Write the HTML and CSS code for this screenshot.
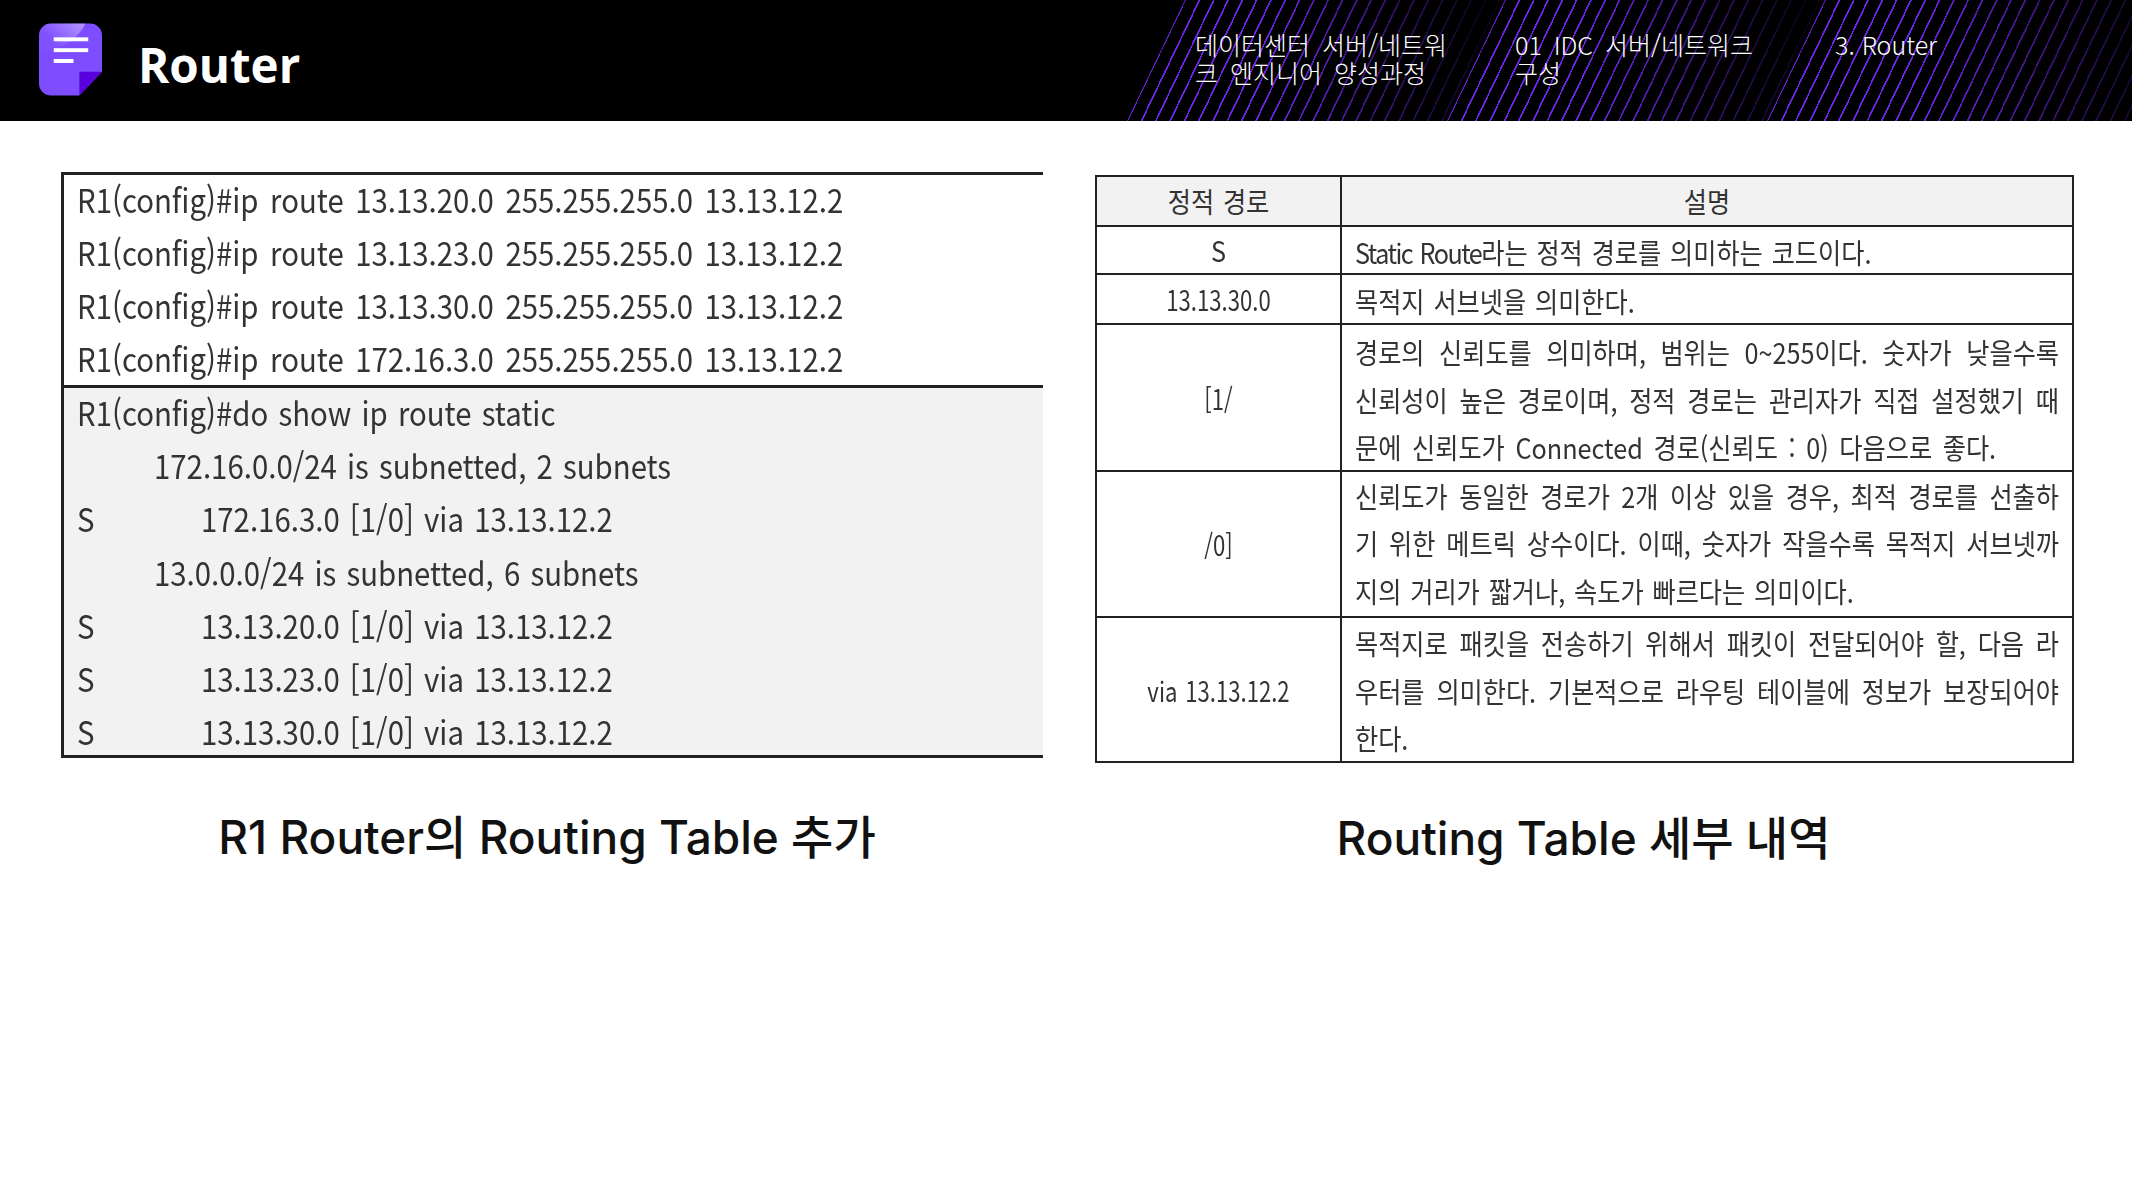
FILE: index.html
```html
<!DOCTYPE html>
<html lang="ko">
<head>
<meta charset="utf-8">
<title>Router</title>
<link rel="stylesheet" href="styles.css">
</head>
<body>
<header class="topbar">
  <svg class="logo" viewBox="0 0 64 73" aria-hidden="true">
    <defs>
      <linearGradient id="shine" x1="0.2" y1="0.5" x2="1" y2="0">
        <stop offset="0" stop-color="#fff" stop-opacity="0.02"/>
        <stop offset="1" stop-color="#fff" stop-opacity="0.42"/>
      </linearGradient>
    </defs>
    <path fill="#7d4dff" d="M12 0H52A12 12 0 0 1 64 12V49L41 73H12A12 12 0 0 1 0 61V12A12 12 0 0 1 12 0Z"/>
    <path fill="url(#shine)" d="M12 0H47C40 16 22 27 0 29V12A12 12 0 0 1 12 0Z"/>
    <path fill="#5a00dc" d="M41 49H64L41 73Z"/>
    <rect fill="#fff" x="15" y="14" width="35" height="4"/>
    <rect fill="#fff" x="15" y="25" width="35" height="4"/>
    <rect fill="#fff" x="15" y="36" width="20" height="4"/>
  </svg>
  <h1 class="title">Router</h1>
  <nav class="crumbs">
    <div class="crumb"><span class="crumb-text">데이터센터 서버/네트워크 엔지니어 양성과정</span></div>
    <div class="crumb"><span class="crumb-text">01 IDC 서버/네트워크 구성</span></div>
    <div class="crumb crumb-last"><span class="crumb-text">3. Router</span></div>
  </nav>
</header>
<main class="slide">
  <figure class="panel">
    <div class="console">
      <div class="console-top">
        <div class="line"><span class="txt">R1(config)#ip route 13.13.20.0 255.255.255.0 13.13.12.2</span></div>
        <div class="line"><span class="txt">R1(config)#ip route 13.13.23.0 255.255.255.0 13.13.12.2</span></div>
        <div class="line"><span class="txt">R1(config)#ip route 13.13.30.0 255.255.255.0 13.13.12.2</span></div>
        <div class="line"><span class="txt">R1(config)#ip route 172.16.3.0 255.255.255.0 13.13.12.2</span></div>
      </div>
      <div class="console-bottom">
        <div class="line"><span class="txt">R1(config)#do show ip route static</span></div>
        <div class="line line-sub"><span class="txt">172.16.0.0/24 is subnetted, 2 subnets</span></div>
        <div class="line line-route"><span class="code">S</span><span class="txt">172.16.3.0 [1/0] via 13.13.12.2</span></div>
        <div class="line line-sub"><span class="txt">13.0.0.0/24 is subnetted, 6 subnets</span></div>
        <div class="line line-route"><span class="code">S</span><span class="txt">13.13.20.0 [1/0] via 13.13.12.2</span></div>
        <div class="line line-route"><span class="code">S</span><span class="txt">13.13.23.0 [1/0] via 13.13.12.2</span></div>
        <div class="line line-route"><span class="code">S</span><span class="txt">13.13.30.0 [1/0] via 13.13.12.2</span></div>
      </div>
    </div>
    <figcaption class="caption caption-left">R1 Router의 Routing Table 추가</figcaption>
  </figure>
  <figure class="panel panel-right">
    <table class="detail">
      <colgroup><col class="col-a"><col class="col-b"></colgroup>
      <thead>
        <tr class="r-head"><th><span class="mid">정적 경로</span></th><th><span class="mid">설명</span></th></tr>
      </thead>
      <tbody>
        <tr class="r-s"><td class="key"><span class="mid">S</span></td><td class="desc"><span class="ln end"><span class="nar">Static Route</span>라는 정적 경로를 의미하는 코드이다.</span></td></tr>
        <tr class="r-net"><td class="key"><span class="mid num">13.13.30.0</span></td><td class="desc"><span class="ln end">목적지 서브넷을 의미한다.</span></td></tr>
        <tr class="r-a"><td class="key"><span class="mid num">[1/</span></td><td class="desc">
          <span class="ln">경로의 신뢰도를 의미하며, 범위는 0~255이다. 숫자가 낮을수록</span>
          <span class="ln">신뢰성이 높은 경로이며, 정적 경로는 관리자가 직접 설정했기 때</span>
          <span class="ln end wide">문에 신뢰도가 Connected 경로(신뢰도 : 0) 다음으로 좋다.</span></td></tr>
        <tr class="r-b"><td class="key"><span class="mid num">/0]</span></td><td class="desc">
          <span class="ln">신뢰도가 동일한 경로가 2개 이상 있을 경우, 최적 경로를 선출하</span>
          <span class="ln">기 위한 메트릭 상수이다. 이때, 숫자가 작을수록 목적지 서브넷까</span>
          <span class="ln end">지의 거리가 짧거나, 속도가 빠르다는 의미이다.</span></td></tr>
        <tr class="r-c"><td class="key"><span class="mid num">via 13.13.12.2</span></td><td class="desc">
          <span class="ln">목적지로 패킷을 전송하기 위해서 패킷이 전달되어야 할, 다음 라</span>
          <span class="ln">우터를 의미한다. 기본적으로 라우팅 테이블에 정보가 보장되어야</span>
          <span class="ln end">한다.</span></td></tr>
      </tbody>
    </table>
    <figcaption class="caption caption-right">Routing Table 세부 내역</figcaption>
  </figure>
</main>
</body>
</html>
```
FILE: styles.css
```css
* { box-sizing: border-box; }
html, body { margin: 0; background: #fff; }
body { width: 2132px; height: 1200px; overflow: hidden; font-family: "Noto Sans CJK KR", "Noto Sans", sans-serif; color: #222; }

.topbar { height: 121px; background: #000; display: flex; align-items: center; padding-left: 39px; overflow: hidden; }
.logo { width: 63px; height: 73px; flex: none; margin-top: -2px; }
.title { margin: 8px 0 0 36px; font: 700 47.5px/1 "Open Sans", sans-serif; color: #fff; }

.crumbs { margin-left: auto; width: 1005px; height: 121px; display: flex; flex: none; }
.crumb { position: relative; width: 378px; height: 121px; flex: none; margin-right: -58px; padding: 30px 0 0 68px; }
.crumb-last { width: 423px; margin-right: 0; }
.crumb::before {
  content: ""; position: absolute; inset: 0;
  background: repeating-linear-gradient(115.6deg, #6a24e6 0, #6a24e6 1.7px, transparent 1.7px, transparent 12.9px);
  clip-path: polygon(58px 0, 100% 0, calc(100% - 58px) 100%, 0 100%);
  -webkit-mask-image: linear-gradient(to right, #000 35%, rgba(0,0,0,.12) 92%, rgba(0,0,0,.05) 100%);
  mask-image: linear-gradient(to right, #000 35%, rgba(0,0,0,.12) 92%, rgba(0,0,0,.05) 100%);
}
.crumb-text { position: relative; display: block; width: 262px; font-size: 25px; font-weight: 300; line-height: 28px; color: #fff; word-break: break-all; word-spacing: 5px; }
.crumb-last .crumb-text { word-spacing: 0; }

.slide { display: grid; grid-template-columns: 982px 977px; column-gap: 52px; padding: 51px 0 0 61px; }
.panel { margin: 0; display: flex; flex-direction: column; }
.panel-right { margin-top: 3px; }

.console { height: 586px; border: 3px solid #222; border-right: 0; filter: blur(.4px); font-size: 33px; color: #333; }
.console-top { height: 213px; border-bottom: 3px solid #222; }
.console-bottom { height: 367px; background: #f2f2f2; }
.console-top .line { height: 53px; padding-bottom: 5px; }
.console-top .txt { word-spacing: 3.7px; }
.console-bottom .line { height: 53.3px; padding-bottom: 6px; }
.console-bottom .txt { word-spacing: 2.2px; }
.line { display: flex; align-items: center; padding-left: 13px; white-space: nowrap; }
.line-sub { padding-left: 90px; }
.code { width: 124px; flex: none; transform: scaleX(.89); transform-origin: left center; }
.txt { display: block; transform: scaleX(.89); transform-origin: left center; }

.detail { width: 977px; height: 586px; border-collapse: collapse; table-layout: fixed; filter: blur(.4px); font-size: 28px; color: #333; }
.col-a { width: 245px; }
.col-b { width: 732px; }
.detail th, .detail td { border: 2.5px solid #222; padding: 0; font-weight: 400; text-align: center; vertical-align: middle; }
.detail th { background: #f2f2f2; }
.mid { display: block; transform: scaleX(.9); word-spacing: 2px; }
.mid.num { transform: scaleX(.79); }
.r-head { height: 50px; }
.r-s { height: 48px; }
.r-net { height: 50px; }
.r-a { height: 147px; }
.r-b { height: 146px; }
.r-c { height: 145px; }
.detail td.desc { padding: 0 13px; text-align: left; }
.ln { display: block; width: calc(100% / .9); line-height: 47.5px; white-space: nowrap; text-align: justify; text-align-last: justify; transform: scaleX(.9); transform-origin: left center; }
.ln.end { text-align-last: left; word-spacing: 2px; }
.ln.end.wide { word-spacing: 4px; }
.r-s .ln, .r-net .ln { line-height: 44px; transform: translateY(2px) scaleX(.9); }
.r-a .ln { transform: translateY(2.5px) scaleX(.9); }
.r-c .ln { transform: translateY(1.5px) scaleX(.9); }
.nar { letter-spacing: -1.7px; }

.caption { text-align: center; font-family: Inter, "Noto Sans CJK KR", sans-serif; font-size: 46px; font-weight: 500; line-height: 60px; color: #111; }
.caption-left { padding-right: 10px; margin-top: 49px; }
.caption-right { margin-top: 45px; }
```
